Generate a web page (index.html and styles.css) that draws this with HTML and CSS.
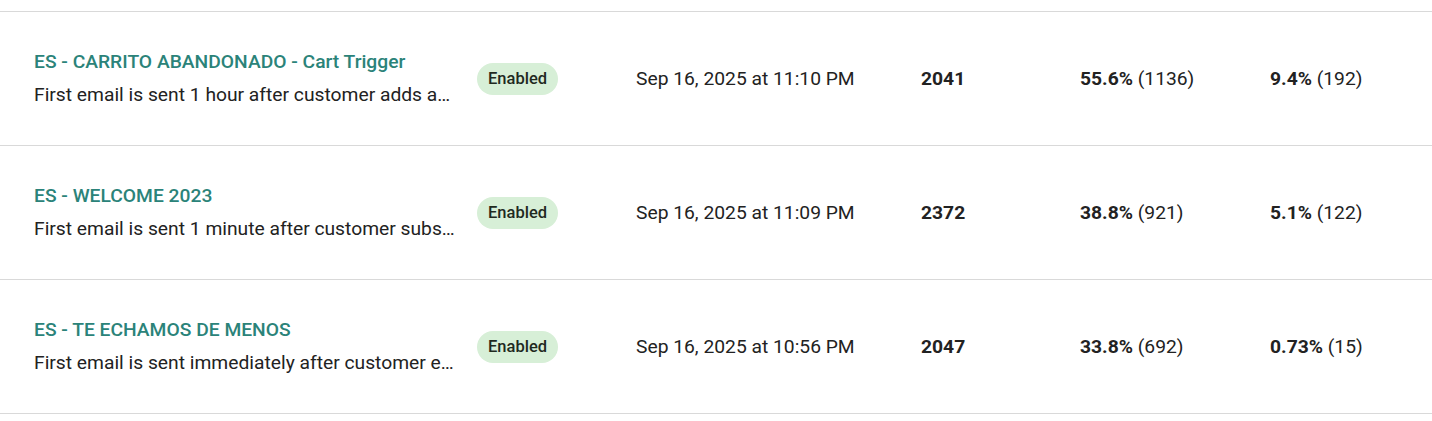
FILE: index.html
```html
<!DOCTYPE html>
<html>
<head>
<meta charset="utf-8">
<link rel="stylesheet" href="styles.css">
</head>
<body>
<div class="table">
  <div class="row">
    <div class="name">
      <a class="title">ES - CARRITO ABANDONADO - Cart Trigger</a>
      <div class="desc">First email is sent 1 hour after customer adds a…</div>
    </div>
    <div class="status"><span class="badge">Enabled</span></div>
    <div class="date">Sep 16, 2025 at 11:10 PM</div>
    <div class="count">2041</div>
    <div class="rate"><b>55.6%</b> (1136)</div>
    <div class="rate"><b>9.4%</b> (192)</div>
  </div>
  <div class="row">
    <div class="name">
      <a class="title">ES - WELCOME 2023</a>
      <div class="desc">First email is sent 1 minute after customer subs…</div>
    </div>
    <div class="status"><span class="badge">Enabled</span></div>
    <div class="date">Sep 16, 2025 at 11:09 PM</div>
    <div class="count">2372</div>
    <div class="rate"><b>38.8%</b> (921)</div>
    <div class="rate"><b>5.1%</b> (122)</div>
  </div>
  <div class="row">
    <div class="name">
      <a class="title">ES - TE ECHAMOS DE MENOS</a>
      <div class="desc">First email is sent immediately after customer e…</div>
    </div>
    <div class="status"><span class="badge">Enabled</span></div>
    <div class="date">Sep 16, 2025 at 10:56 PM</div>
    <div class="count">2047</div>
    <div class="rate"><b>33.8%</b> (692)</div>
    <div class="rate"><b>0.73%</b> (15)</div>
  </div>
</div>
</body>
</html>
```
FILE: styles.css
```css
html, body {
  margin: 0;
  padding: 0;
  background: #fff;
}
body {
  font-family: Roboto, "Liberation Sans", sans-serif;
  color: #222;
}
.table {
  padding-top: 11px;
}
.row {
  display: grid;
  grid-template-columns: 443px 159px 285px 159px 190px 1fr;
  align-items: center;
  height: 133px;
  padding-left: 34px;
  border-top: 1px solid #d9d9d9;
}
.row:last-child {
  border-bottom: 1px solid #d9d9d9;
}
.name {
  display: flex;
  flex-direction: column;
  gap: 7px;
  min-width: 0;
}
.title {
  font-size: 19.25px;
  line-height: 26px;
  font-weight: 500;
  color: #2b8379;
  white-space: nowrap;
}
.desc {
  font-size: 19.25px;
  line-height: 26px;
  color: #222;
  white-space: nowrap;
}
.badge {
  display: inline-block;
  background: #d7efd7;
  color: #1f2a1f;
  font-size: 16.5px;
  font-weight: 500;
  line-height: 32px;
  padding: 0 11px;
  border-radius: 16px;
}
.date {
  font-size: 19.25px;
}
.count {
  font-size: 19.25px;
  font-weight: 700;
}
.rate {
  font-size: 19.25px;
}
.rate b {
  font-weight: 700;
}
```
